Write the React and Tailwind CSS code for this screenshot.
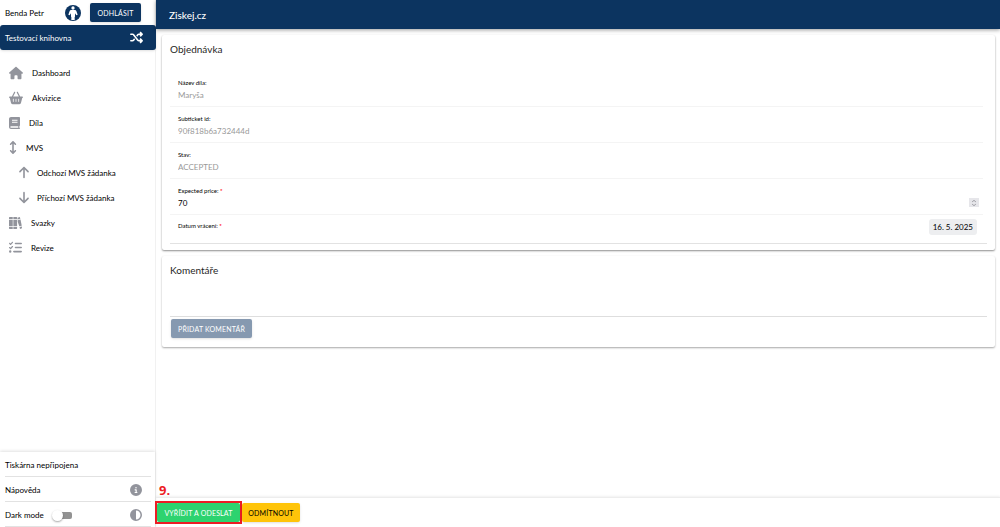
import React, { useState } from 'react';
import {
  FaHouse,
  FaBasketShopping,
  FaArrowsUpDown,
  FaArrowUp,
  FaArrowDown,
  FaListCheck,
  FaShuffle,
  FaCircleInfo,
  FaCircleHalfStroke,
} from 'react-icons/fa6';

function BookIcon({ className }) {
  return (
    <svg viewBox="0 0 22 24" className={className} fill="currentColor" aria-hidden="true">
      <path
        fillRule="evenodd"
        d="M4 0h16.500c.8 0 1.500.7 1.500 1.500v15c0 .8-.5 1.500-1.200 1.500v3.500h.2c.6 0 1 .5 1 1.200s-.5 1.300-1.200 1.300H4c-2.200 0-4-1.800-4-4V4c0-2.200 1.800-4 4-4zM4 18.500h14.500v3H4c-.8 0-1.500-.7-1.500-1.500s.7-1.500 1.500-1.500zM6 5.500h11v2H6zM6 9.500h11v2H6z"
      />
    </svg>
  );
}

function BooksIcon({ className }) {
  return (
    <svg viewBox="0 0 26 24" className={className} fill="currentColor" aria-hidden="true">
      <path d="M1 0h6.5v4H0V1zM0 5.4h7.5v13.2H0zM0 20h7.5v4H1l-1-1zM8.7 0h6.5l1 1v3H8.7zM8.7 5.4h7.5v13.2H8.7zM8.7 20h7.5v3l-1 1H8.7z" />
      <path d="M17 1.3l4.7-1.2 1 3.6-5.5 1.5zM17.4 6.5l5.6-1.5 2.5 12.4-4.9 1.2-3.2-9zM21.1 20l4.7-1.1.2 3.7-4 1.3z" />
    </svg>
  );
}

function PersonBadge({ className }) {
  return (
    <svg viewBox="0 0 48 48" className={className} aria-hidden="true">
      <circle cx="24" cy="24" r="24" fill="#0c3460" />
      <circle cx="24" cy="9" r="5" fill="#fff" />
      <path d="M18 15h12c2 0 3 1 4 3l4 11-4 2-4-6v10l-1 1v9H19v-9l-1-1V25l-4 6-4-2 4-11c1-2 2-3 4-3z" fill="#fff" />
    </svg>
  );
}

const menu = [
  { title: 'Dashboard', icon: <FaHouse size={14} /> },
  { title: 'Akvizice', icon: <FaBasketShopping size={14} /> },
  { title: 'Díla', icon: <BookIcon className="h-3 w-[11px]" /> },
  { title: 'MVS', icon: <FaArrowsUpDown size={13} className="w-2" /> },
  { title: 'Odchozí MVS žádanka', icon: <FaArrowUp size={13} className="w-[10px]" />, nested: true },
  { title: 'Příchozí MVS žádanka', icon: <FaArrowDown size={13} className="w-[10px]" />, nested: true },
  { title: 'Svazky', icon: <BooksIcon className="h-3 w-[13px]" /> },
  { title: 'Revize', icon: <FaListCheck size={13} /> },
];

const readonlyFields = [
  { id: 'title', label: 'Název díla:', value: 'Maryša' },
  { id: 'subticket', label: 'Subticket id:', value: '90f818b6a732444d' },
  { id: 'state', label: 'Stav:', value: 'ACCEPTED' },
];

function Field({ id, label, required, children }) {
  return (
    <div className="h-9 mr-1 pl-2 pr-1 flex flex-col justify-center border-b border-[#f4f4f4]">
      <label htmlFor={id} className="text-[6px] leading-3">
        {label}
        {required && <span className="text-[#f00] font-bold"> *</span>}
      </label>
      {children}
    </div>
  );
}

function Sidebar() {
  const [dark, setDark] = useState(false);

  return (
    <aside className="w-[156px] shrink-0 flex flex-col border-r border-[#f1f1f1]">
      <div className="h-[25px] flex items-center pl-[5px] pr-3.5">
        <span className="flex-1">Benda Petr</span>
        <PersonBadge className="size-4 mr-[9px]" />
        <button className="h-[19px] w-[51px] rounded-xs bg-[#0c3460] text-white text-[7px] tracking-wide shadow">
          ODHLÁSIT
        </button>
      </div>
      <button className="h-[25px] -mr-px rounded-[3px] bg-[#0c3460] text-white flex items-center justify-between pl-[5px] pr-[13px] shadow">
        Testovací knihovna
        <FaShuffle size={13} />
      </button>

      <nav className="flex-1 pt-2.5">
        {menu.map((item) => (
          <a
            key={item.title}
            href="#"
            className={`h-[25px] flex items-center ${item.nested ? 'pl-[19px]' : 'pl-[9px]'}`}
          >
            <span className={`text-[#92949c] ${item.nested ? 'mr-2' : 'mr-[9px]'}`}>{item.icon}</span>
            {item.title}
          </a>
        ))}
      </nav>

      <div className="shadow-[0_-1px_3px_rgba(0,0,0,0.12)] pl-[5px] pr-1">
        <div className="h-[25px] pt-0.5 flex items-center border-b border-[#e2e2e2]">Tiskárna nepřipojena</div>
        <a href="#" className="h-[25px] pt-0.5 flex items-center justify-between border-b border-[#e2e2e2] pr-[9px]">
          Nápověda
          <FaCircleInfo size={12} className="text-[#92949c]" />
        </a>
        <div className="h-[25px] pt-0.5 flex items-center border-b border-[#e2e2e2] pr-[9px]">
          <label htmlFor="dark" className="mr-2">Dark mode</label>
          <span className="relative w-5 h-3 flex items-center justify-end">
            <span className="w-3.5 h-[7px] rounded-xs bg-[#929292]" />
            <span className={`absolute size-[11px] rounded-full bg-white shadow-[0_1px_2px_rgba(0,0,0,0.35)] ${dark ? 'right-0' : 'left-0'}`} />
            <input
              id="dark"
              type="checkbox"
              checked={dark}
              onChange={(e) => setDark(e.target.checked)}
              className="absolute inset-0 opacity-0 cursor-pointer"
            />
          </span>
          <FaCircleHalfStroke size={12} className="ml-auto text-[#92949c]" />
        </div>
      </div>
    </aside>
  );
}

export default function App() {
  const [price, setPrice] = useState('70');

  return (
    <div className="h-screen flex bg-white text-black text-[8px] leading-3 font-['Lato','Noto_Sans',sans-serif]">
      <Sidebar />

      <div className="flex-1 min-w-0 flex flex-col">
        <header className="h-[29px] shrink-0 bg-[#0c3460] text-white flex items-center px-[13px] shadow-[0_1px_4px_rgba(0,0,0,0.4)]">
          <h1 className="text-[10px] font-medium">Ziskej.cz</h1>
        </header>

        <main className="flex-1 min-h-0 pt-1.5 pl-1.5 pr-[5px] flex flex-col gap-1.5">
          <section className="rounded-xs px-2 pb-1.5 shadow-[0_1px_2px_rgba(0,0,0,0.45)]">
            <h2 className="h-9 pt-2 text-[10px] leading-3 text-[#262626]">Objednávka</h2>
            <div className="border-b border-[#e2e2e2]">
              {readonlyFields.map((field) => (
                <Field key={field.id} id={field.id} label={field.label}>
                  <input id={field.id} readOnly value={field.value} className="h-3 w-full text-[#999] outline-none" />
                </Field>
              ))}
              <Field id="price" label="Expected price:" required>
                <span className="flex items-center">
                  <input
                    id="price"
                    inputMode="numeric"
                    value={price}
                    onChange={(e) => setPrice(e.target.value)}
                    className="h-3 flex-1 outline-none"
                  />
                  <button
                    aria-label="Expected price"
                    onClick={() => setPrice(String(Number(price) + 1))}
                    className="w-2.5 h-[9px] bg-[#e6e6ea] flex items-center justify-center"
                  >
                    <svg viewBox="0 0 8 10" className="h-2 w-1.5" fill="none" stroke="#85858c">
                      <path d="M1.5 3.5L4 1.5l2.5 2M1.5 6.5L4 8.5l2.5-2" />
                    </svg>
                  </button>
                </span>
              </Field>
              <div className="h-7 pl-2 pr-2.5 pt-1 flex items-start justify-between">
                <label htmlFor="date" className="text-[6px] leading-[14px]">
                  Datum vrácení:<span className="text-[#f00] font-bold"> *</span>
                </label>
                <button id="date" className="h-4 px-1 rounded-[3px] bg-[#edeef0]">16. 5. 2025</button>
              </div>
            </div>
          </section>

          <section className="rounded-xs px-2 pb-[9px] shadow-[0_1px_2px_rgba(0,0,0,0.35)]">
            <h2 className="h-7 pt-2 text-[10px] leading-3 text-[#262626]">Komentáře</h2>
            <textarea
              aria-label="Komentáře"
              className="block w-full h-[33px] resize-none border-b border-[#dedede] outline-none"
            />
            <button className="mt-0.5 ml-px h-[19px] w-[81px] rounded-xs bg-[#8699b0] text-white text-[7px] tracking-wide shadow-sm">
              PŘIDAT KOMENTÁŘ
            </button>
          </section>
        </main>

        <footer className="relative h-[30px] shrink-0 border-t border-[#ededed] shadow-[0_-1px_2px_rgba(0,0,0,0.06)] flex items-start pt-[3px]">
          <span className="absolute left-[3px] -top-[15px] text-[13px] leading-[14px] font-bold text-[#ed1c24] font-['Open_Sans',sans-serif]">
            9.
          </span>
          <div className="-ml-px border-2 border-[#ed1c24]">
            <button className="block h-[19px] w-[83px] rounded-xs bg-[#2dd36f] text-white text-[7px] tracking-wide">
              VYŘÍDIT A ODESLAT
            </button>
          </div>
          <button className="mt-0.5 h-[19px] w-[58px] rounded-xs bg-[#ffc409] text-[7px] tracking-wide shadow">
            ODMÍTNOUT
          </button>
        </footer>
      </div>
    </div>
  );
}
